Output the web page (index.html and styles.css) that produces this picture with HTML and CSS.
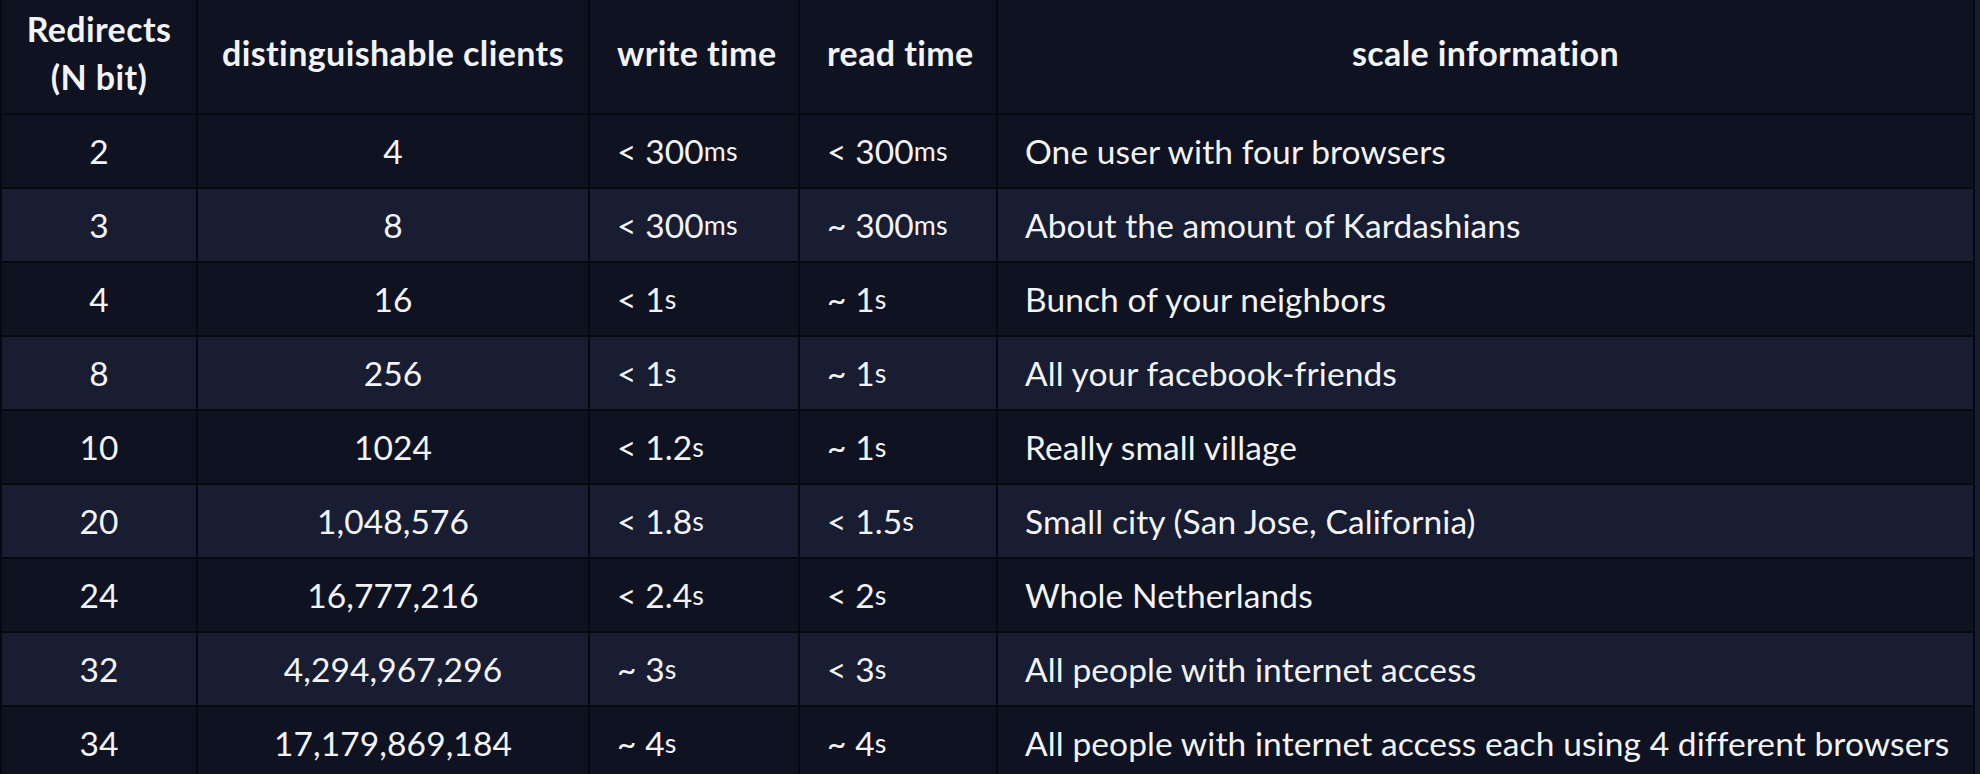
FILE: index.html
```html
<!DOCTYPE html>
<html lang="en">
<head>
<meta charset="utf-8">
<title>Redirect scale table</title>
<link rel="stylesheet" href="styles.css">
</head>
<body>
<div class="table" role="table">
  <div class="row head" role="row">
    <div class="cell center" role="columnheader">Redirects<br>(N bit)</div>
    <div class="cell center" role="columnheader">distinguishable clients</div>
    <div class="cell" role="columnheader">write time</div>
    <div class="cell" role="columnheader">read time</div>
    <div class="cell center" role="columnheader">scale information</div>
  </div>
  <div class="row" role="row">
    <div class="cell center">2</div><div class="cell center">4</div>
    <div class="cell">&lt; 300<span class="u">ms</span></div><div class="cell">&lt; 300<span class="u">ms</span></div>
    <div class="cell">One user with four browsers</div>
  </div>
  <div class="row" role="row">
    <div class="cell center">3</div><div class="cell center">8</div>
    <div class="cell">&lt; 300<span class="u">ms</span></div><div class="cell">~ 300<span class="u">ms</span></div>
    <div class="cell">About the amount of Kardashians</div>
  </div>
  <div class="row" role="row">
    <div class="cell center">4</div><div class="cell center">16</div>
    <div class="cell">&lt; 1<span class="u">s</span></div><div class="cell">~ 1<span class="u">s</span></div>
    <div class="cell">Bunch of your neighbors</div>
  </div>
  <div class="row" role="row">
    <div class="cell center">8</div><div class="cell center">256</div>
    <div class="cell">&lt; 1<span class="u">s</span></div><div class="cell">~ 1<span class="u">s</span></div>
    <div class="cell">All your facebook-friends</div>
  </div>
  <div class="row" role="row">
    <div class="cell center">10</div><div class="cell center">1024</div>
    <div class="cell">&lt; 1.2<span class="u">s</span></div><div class="cell">~ 1<span class="u">s</span></div>
    <div class="cell">Really small village</div>
  </div>
  <div class="row" role="row">
    <div class="cell center">20</div><div class="cell center">1,048,576</div>
    <div class="cell">&lt; 1.8<span class="u">s</span></div><div class="cell">&lt; 1.5<span class="u">s</span></div>
    <div class="cell">Small city (San Jose, California)</div>
  </div>
  <div class="row" role="row">
    <div class="cell center">24</div><div class="cell center">16,777,216</div>
    <div class="cell">&lt; 2.4<span class="u">s</span></div><div class="cell">&lt; 2<span class="u">s</span></div>
    <div class="cell">Whole Netherlands</div>
  </div>
  <div class="row" role="row">
    <div class="cell center">32</div><div class="cell center">4,294,967,296</div>
    <div class="cell">~ 3<span class="u">s</span></div><div class="cell">&lt; 3<span class="u">s</span></div>
    <div class="cell">All people with internet access</div>
  </div>
  <div class="row" role="row">
    <div class="cell center">34</div><div class="cell center">17,179,869,184</div>
    <div class="cell">~ 4<span class="u">s</span></div><div class="cell">~ 4<span class="u">s</span></div>
    <div class="cell">All people with internet access each using 4 different browsers</div>
  </div>
</div>
</body>
</html>
```

FILE: styles.css
```css
html, body {
  margin: 0;
  padding: 0;
  background: #171c2f;
  height: 100%;
  overflow: hidden;
}

.table {
  width: 1975px;
  display: grid;
  grid-template-columns: 194px 390px 208px 196px 975px;
  grid-auto-rows: 72px;
  grid-template-rows: 113px;
  gap: 2px;
  padding: 0 2px 2px 2px;
  box-sizing: border-box;
  background: #070910;
  font-family: "Lato", "Noto Sans", sans-serif;
  font-size: 33.5px;
  letter-spacing: 0.1px;
  color: #f2f3f6;
}

.row {
  display: contents;
}

.cell {
  display: flex;
  align-items: center;
  padding: 0 27px;
  background: #0f1220;
  line-height: 48px;
  white-space: nowrap;
}

.row:nth-child(odd) .cell {
  background: #181d31;
}

.cell.center {
  justify-content: center;
  text-align: center;
  padding: 0;
}

.row.head .cell {
  font-weight: 700;
  font-size: 34px;
  letter-spacing: 0.4px;
  background: #0f1220;
  padding-bottom: 8px;
}

.u {
  font-size: 0.8em;
}
```
